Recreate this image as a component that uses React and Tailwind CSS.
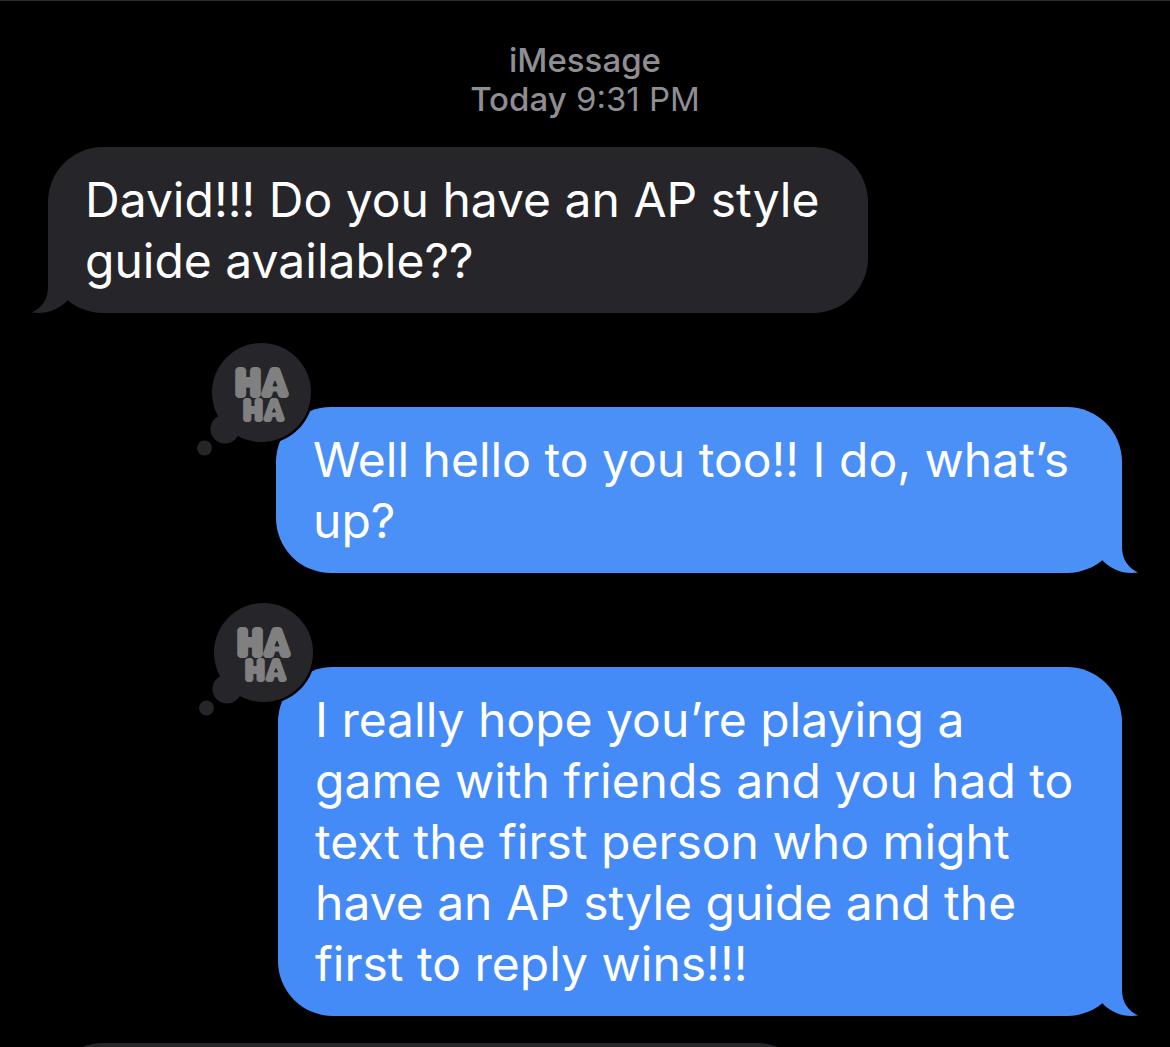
import React from "react";
import clsx from "clsx";

const messages = [
  {
    id: 1,
    lines: ["David!!! Do you have an AP style", "guide available??"],
    className: "max-w-[820px] bg-[#26262a] text-[#26262a]",
  },
  {
    id: 2,
    sent: true,
    haha: true,
    lines: ["Well hello to you too!! I do, what’s", "up?"],
    className: "max-w-[846px] bg-[#4b90f7] text-[#4b90f7]",
  },
  {
    id: 3,
    sent: true,
    haha: true,
    lines: [
      "I really hope you’re playing a",
      "game with friends and you had to",
      "text the first person who might",
      "have an AP style guide and the",
      "first to reply wins!!!",
    ],
    className: "max-w-[844px] bg-[#458bf7] text-[#458bf7]",
  },
];

function Tail({ sent }) {
  return (
    <svg
      viewBox="0 0 50 60"
      aria-hidden="true"
      className={clsx(
        "absolute bottom-0 h-[60px] w-[50px]",
        sent ? "-right-4 -scale-x-100" : "-left-4"
      )}
    >
      <path
        d="M16 0V34C16 46 10 55 0 59.5C14 61.5 26 57 35 48L46 30V0Z"
        fill="currentColor"
      />
    </svg>
  );
}

function HahaReaction() {
  return (
    <svg
      viewBox="0 0 120 120"
      role="img"
      aria-label="Ha ha reaction"
      className="absolute -left-20 -top-[67px] h-[120px] w-[120px]"
    >
      {/* black ring separates the reaction from the bubble */}
      <circle cx="65.5" cy="52.5" r="52" fill="#000" />
      <circle cx="65.5" cy="52.5" r="49.5" fill="#26262a" />
      <circle cx="29" cy="89" r="14.5" fill="#26262a" />
      <circle cx="8.5" cy="108" r="7.5" fill="#26262a" />
      <g
        fill="#808080"
        stroke="#808080"
        strokeLinejoin="round"
        textAnchor="middle"
        className="font-['Inter'] font-normal"
      >
        <text y="54" x="52 79" fontSize="31" strokeWidth="8">HA</text>
        <text y="79" x="57 78" fontSize="24" strokeWidth="6">HA</text>
      </g>
      {/* counters of the balloon letters */}
      <path
        d="M79 41L77 46H81ZM78 68.5L76.5 72H79.5Z"
        fill="#26262a"
        stroke="#26262a"
        strokeLinejoin="round"
      />
    </svg>
  );
}

function Message({ message }) {
  const { sent, haha, lines, className } = message;

  return (
    <li
      className={clsx(
        "relative w-full rounded-[55px] px-[37px] py-[22px]",
        sent && "self-end",
        className
      )}
    >
      <Tail sent={sent} />
      <p className="relative whitespace-nowrap text-white">
        {lines.map((line) => (
          <span key={line} className="block">{line}</span>
        ))}
      </p>
      {haha && <HahaReaction />}
    </li>
  );
}

export default function App() {
  return (
    <main className="flex h-screen flex-col overflow-hidden border-t border-[#2a2a2c] bg-black px-12 pt-10 font-['Inter','Liberation_Sans',sans-serif]">
      <header className="mb-7 shrink-0 text-center text-[33px] leading-[39px] text-[#8e8e93]">
        <h1 className="font-medium">iMessage</h1>
        <p>
          <span className="font-medium">Today</span> 9:31 PM
        </p>
      </header>

      <ul className="flex shrink-0 flex-col gap-[94px] text-[48px] leading-[61px]">
        {messages.map((message) => (
          <Message key={message.id} message={message} />
        ))}
      </ul>

      {/* next incoming message, cut off by the bottom of the screen */}
      <div className="mt-[27px] h-[166px] w-full max-w-[764px] shrink-0 rounded-[55px] bg-[#26262a]" />
    </main>
  );
}
